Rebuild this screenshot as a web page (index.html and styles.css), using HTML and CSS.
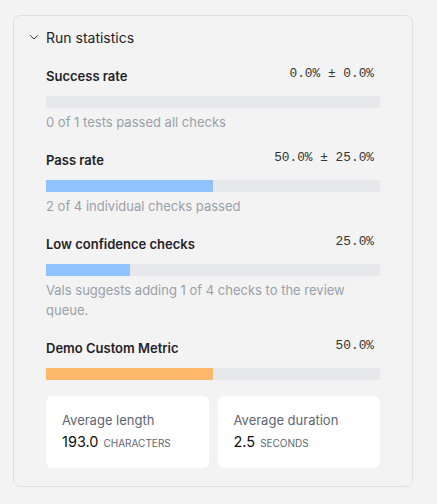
FILE: index.html
```html
<!DOCTYPE html>
<html>
<head>
<meta charset="utf-8">
<link rel="stylesheet" href="styles.css">
</head>
<body>
<div class="page">
  <section class="card">
    <header class="card-header">
      <svg class="chevron" width="10" height="10" viewBox="0 0 10 10"><path d="M1.2 3.3 L5 7 L8.8 3.3" fill="none" stroke="#333" stroke-width="1"/></svg>
      <span class="title">Run statistics</span>
    </header>
    <div class="card-body">
      <div class="metric">
        <div class="metric-head"><span class="label">Success rate</span><span class="value">0.0% ± 0.0%</span></div>
        <div class="track"><div class="fill blue" style="width:0%"></div></div>
        <div class="note">0 of 1 tests passed all checks</div>
      </div>
      <div class="metric">
        <div class="metric-head"><span class="label">Pass rate</span><span class="value">50.0% ± 25.0%</span></div>
        <div class="track"><div class="fill blue" style="width:50%"></div></div>
        <div class="note">2 of 4 individual checks passed</div>
      </div>
      <div class="metric">
        <div class="metric-head"><span class="label">Low confidence checks</span><span class="value">25.0%</span></div>
        <div class="track"><div class="fill blue" style="width:25%"></div></div>
        <div class="note">Vals suggests adding 1 of 4 checks to the review queue.</div>
      </div>
      <div class="metric last">
        <div class="metric-head"><span class="label">Demo Custom Metric</span><span class="value">50.0%</span></div>
        <div class="track"><div class="fill orange" style="width:50%"></div></div>
      </div>
      <div class="stats">
        <div class="stat">
          <div class="stat-label">Average length</div>
          <div class="stat-value"><span class="num">193.0</span><span class="unit">CHARACTERS</span></div>
        </div>
        <div class="stat">
          <div class="stat-label">Average duration</div>
          <div class="stat-value"><span class="num">2.5</span><span class="unit">SECONDS</span></div>
        </div>
      </div>
    </div>
  </section>
</div>
</body>
</html>
```

FILE: styles.css
```css
* { box-sizing: border-box; }
html, body { margin: 0; padding: 0; }
body {
  background: #f3f3f3;
  font-family: Inter, "Noto Sans", sans-serif;
  color: #1f2328;
}
.page { padding: 15px 24px 0 13px; }
.card {
  width: 400px;
  border: 1px solid #e0e0e2;
  border-radius: 7px;
  background: #f3f3f3;
  padding: 0 32px 18px 32px;
}
.card-header {
  display: flex;
  align-items: center;
  height: 43px;
  margin-left: -17px;
}
.chevron { margin-right: 7px; margin-top: -2px; }
.title { font-size: 14px; color: #1f2328; }
.card-body { padding-top: 7px; }
.metric { margin-bottom: 18px; }
.metric.last { margin-bottom: 16px; }
.metric-head {
  display: flex;
  justify-content: space-between;
  align-items: center;
  height: 20px;
  margin-bottom: 10px;
}
.label { font-size: 13px; font-weight: 600; color: #1f2328; }
.value {
  font-family: "Liberation Mono", monospace;
  font-size: 12.8px;
  color: #333;
  padding-right: 6px;
  margin-top: -5px;
}
.track { height: 12px; background: #e6e8eb; }
.fill { height: 100%; }
.fill.blue { background: #90c3fd; }
.fill.orange { background: #feb86b; }
.note {
  margin-top: 4px;
  font-size: 13px;
  line-height: 20px;
  color: #9aa0a8;
}
.stats {
  display: grid;
  grid-template-columns: 1fr 1fr;
  gap: 9px;
}
.stat {
  background: #fff;
  border-radius: 6px;
  height: 72px;
  padding: 14px 16px;
}
.stat-label { font-size: 13px; color: #5f6673; line-height: 20px; }
.stat-value { margin-top: 3px; display: flex; align-items: baseline; gap: 5px; }
.num { font-size: 14.5px; color: #111; }
.unit { font-size: 10px; color: #5f6673; }
```
